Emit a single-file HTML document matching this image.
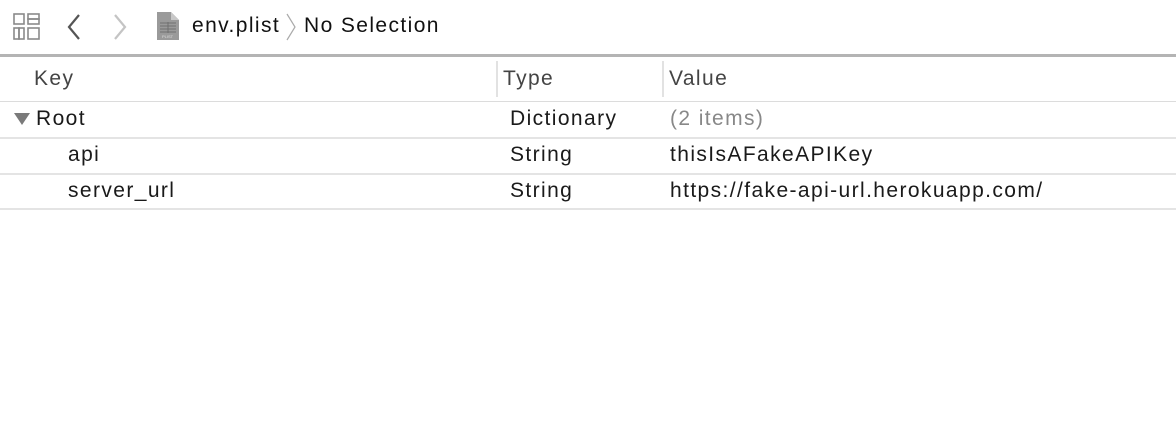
<!DOCTYPE html><html><head><style>
body{margin:0;width:1176px;height:444px;background:#fff;font-family:"Liberation Sans",sans-serif;position:relative;overflow:hidden;color:#1a1a1a}
.a{position:absolute;white-space:nowrap}
.h{position:absolute;left:0;width:1176px;height:1px;background:#dcdcdc}
.t{font-size:21px;letter-spacing:1.4px}
</style></head><body>
<svg class="a" style="left:13px;top:13px" width="28" height="28" viewBox="0 0 28 28" fill="none" stroke="#8a8a8a" stroke-width="1.6">
<rect x="1" y="1" width="10" height="10"/><rect x="15" y="1" width="11" height="5"/><rect x="15" y="6" width="11" height="5"/>
<rect x="1" y="15" width="5" height="11"/><rect x="6" y="15" width="5" height="11"/><rect x="15" y="15" width="11" height="11"/></svg>
<svg class="a" style="left:64px;top:13px" width="20" height="28"><path d="M15 2 L5 14 L15 26" stroke="#555" stroke-width="2.2" fill="none"/></svg>
<svg class="a" style="left:110px;top:13px" width="20" height="28"><path d="M5 2 L15 14 L5 26" stroke="#c4c4c4" stroke-width="2.2" fill="none"/></svg>
<svg class="a" style="left:156px;top:11px" width="24" height="30"><path d="M1 1 H15 L23 9 V29 H1 Z" fill="#9a9a9a"/><path d="M15 1 V9 H23" fill="#c8c8c8"/><g stroke="#707070" stroke-width="1"><path d="M4 12 H20 M4 15 H20 M4 18 H20 M4 21 H20 M12 11 V22"/></g><text x="6" y="27" font-size="4" fill="#ddd">PLIST</text></svg>
<div class="a t" style="left:192px;top:14px;color:#111">env.plist</div>
<svg class="a" style="left:284px;top:12px" width="14" height="30"><path d="M3 2 L11 15 L3 28" stroke="#aaa" stroke-width="1.2" fill="none"/></svg>
<div class="a t" style="left:304px;top:14px;color:#111">No Selection</div>
<div class="a" style="left:0;top:54px;width:1176px;height:3px;background:#b4b4b4"></div>
<div class="a t" style="left:34px;top:67px;color:#444">Key</div>
<div class="a" style="left:496px;top:61px;width:2px;height:36px;background:#e2e2e2"></div>
<div class="a t" style="left:503px;top:67px;color:#444">Type</div>
<div class="a" style="left:662px;top:61px;width:2px;height:36px;background:#e2e2e2"></div>
<div class="a t" style="left:669px;top:67px;color:#444">Value</div>
<div class="h" style="top:101px"></div>
<svg class="a" style="left:13px;top:112px" width="18" height="14"><path d="M1 1 H17 L9 13 Z" fill="#7a7a7a"/></svg>
<div class="a t" style="left:36px;top:107px">Root</div>
<div class="a t" style="left:510px;top:107px">Dictionary</div>
<div class="a t" style="left:670px;top:107px;color:#888">(2 items)</div>
<div class="h" style="top:137px;height:2px;background:#e4e4e4"></div>
<div class="a t" style="left:68px;top:143px">api</div>
<div class="a t" style="left:510px;top:143px">String</div>
<div class="a t" style="left:670px;top:143px">thisIsAFakeAPIKey</div>
<div class="h" style="top:173px;height:2px;background:#e4e4e4"></div>
<div class="a t" style="left:68px;top:179px">server_url</div>
<div class="a t" style="left:510px;top:179px">String</div>
<div class="a t" style="left:670px;top:179px">https://fake-api-url.herokuapp.com/</div>
<div class="h" style="top:208px;height:2px;background:#e4e4e4"></div>
</body></html>
